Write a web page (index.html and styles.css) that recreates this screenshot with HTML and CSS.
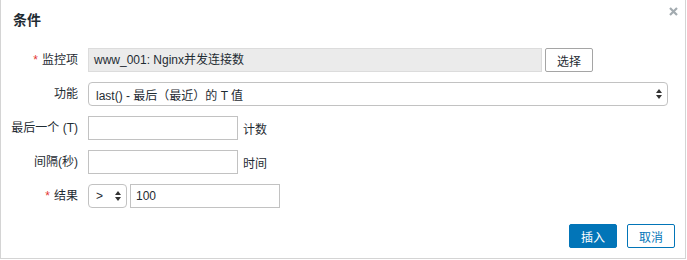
FILE: index.html
```html
<!DOCTYPE html>
<html lang="zh-CN">
<head>
    <meta charset="UTF-8">
    <title>条件</title>
    <link rel="stylesheet" href="styles.css">
</head>
<body>
    <div class="dialog">
        <div class="dialog-head">
            <h4>条件</h4>
            <svg class="close" width="9" height="9" viewBox="0 0 9 9"><path d="M1 1L8 8M8 1L1 8" stroke="#a3abb0" stroke-width="2.2"/></svg>
        </div>

        <!-- condition form -->
        <div class="form">
            <label class="required">监控项</label>
            <div class="field">
                <div class="input readonly wide">www_001: Nginx并发连接数</div>
                <button class="btn-alt">选择</button>
            </div>

            <label>功能</label>
            <div class="field">
                <div class="select full">
                    <span>last() - 最后（最近）的 T 值</span>
                    <svg class="arrows" width="6" height="10" viewBox="0 0 6 10"><path d="M3 0L6 4H0Z M3 10L6 6H0Z" fill="#333"/></svg>
                </div>
            </div>

            <label>最后一个 (T)</label>
            <div class="field">
                <div class="input short"></div>
                <span class="hint">计数</span>
            </div>

            <label>间隔(秒)</label>
            <div class="field">
                <div class="input short"></div>
                <span class="hint">时间</span>
            </div>

            <label class="required">结果</label>
            <div class="field">
                <div class="select small">
                    <span>&gt;</span>
                    <svg class="arrows" width="6" height="10" viewBox="0 0 6 10"><path d="M3 0L6 4H0Z M3 10L6 6H0Z" fill="#333"/></svg>
                </div>
                <div class="input value">100</div>
            </div>
        </div>

        <div class="dialog-foot">
            <button class="btn-main">插入</button>
            <button class="btn-alt">取消</button>
        </div>
    </div>
</body>
</html>
```

FILE: styles.css
```css
body {
    margin: 0;
    font-family: "Liberation Sans", Arial, "Noto Sans CJK SC", sans-serif;
    font-size: 12px;
    color: #1f2c33;
    background-color: #fff;
}

.dialog {
    width: 684px;
    height: 258px;
    border: 1px solid #d4d4d4;
    border-top: none;
    background-color: #fff;
    display: flex;
    flex-direction: column;
}

.dialog-head {
    display: flex;
    justify-content: space-between;
    padding: 11px 7px 0 12px;
    height: 37px;
    box-sizing: border-box;
}

.dialog-head h4 {
    margin: 0;
    font-size: 14px;
    font-weight: bold;
    line-height: 18px;
}

.close {
    margin-top: -4px;
}

.form {
    display: grid;
    grid-template-columns: 77px 1fr;
    column-gap: 10px;
    row-gap: 10px;
    padding-top: 11px;
}

.form label {
    text-align: right;
    line-height: 24px;
    white-space: nowrap;
}

.required::before {
    content: "*";
    color: #e33734;
    margin-right: 4px;
}

.field {
    display: flex;
    align-items: center;
    gap: 3px;
}

.input {
    height: 24px;
    box-sizing: border-box;
    border: 1px solid #c2c2c2;
    padding: 0 5px;
    line-height: 22px;
    background-color: #fff;
}

.readonly {
    background-color: #ebebeb;
    border-color: #dcdcdc;
}

.wide {
    width: 454px;
}

.short {
    width: 150px;
}

.value {
    width: 150px;
}

.hint {
    margin-left: 2px;
}

.select {
    height: 24px;
    box-sizing: border-box;
    border: 1px solid #c2c2c2;
    border-radius: 4px;
    display: flex;
    align-items: center;
    justify-content: space-between;
    padding: 0 5px 0 7px;
}

.full {
    width: 580px;
}

.small {
    width: 39px;
}

button {
    font-family: inherit;
    font-size: 12px;
    height: 24px;
    box-sizing: border-box;
    border-radius: 2px;
    padding: 0 10px;
    cursor: pointer;
}

.btn-alt {
    background-color: #fff;
    border: 1px solid #a5a5a5;
    color: #1f2c33;
    width: 48px;
}

.dialog-foot .btn-alt {
    border-color: #0275b8;
    color: #0275b8;
}

.btn-main {
    background-color: #0275b8;
    border: 1px solid #0275b8;
    color: #fff;
    width: 48px;
}

.dialog-foot {
    display: flex;
    justify-content: flex-end;
    gap: 10px;
    padding: 16px 10px 0 0;
}
```
